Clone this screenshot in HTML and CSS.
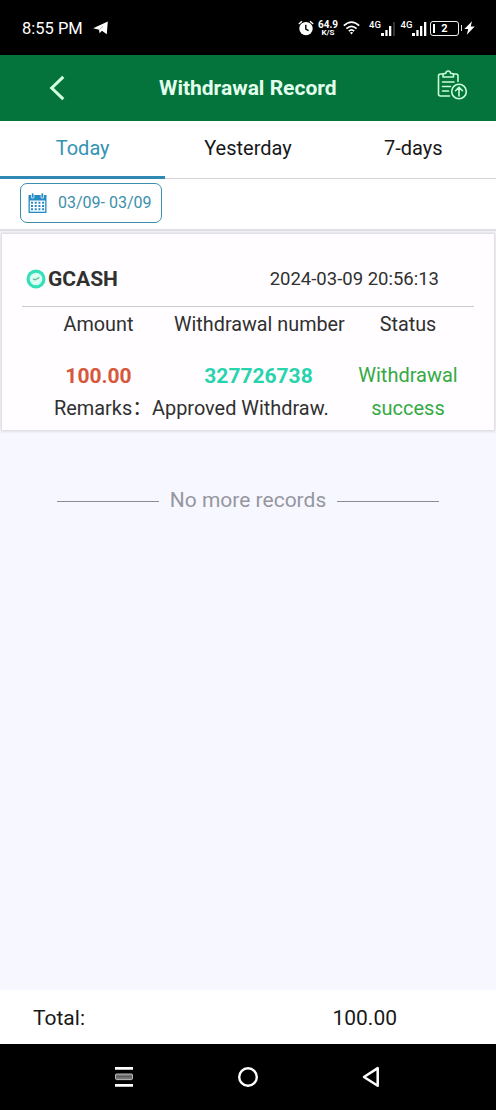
FILE: index.html
```html
<!DOCTYPE html>
<html lang="en">
<head>
<meta charset="utf-8">
<title>Withdrawal Record</title>
<link rel="stylesheet" href="styles.css">
</head>
<body>
<div class="screen">
  <div class="status-bar">
    <span class="clock">8:55 PM</span>
    <svg class="telegram" width="16" height="14" viewBox="0 0 16 14"><path d="M.2 7.200 14.800.5 13.800 13.300 8.900 9.700 6.600 12.300 6 8.800Z" fill="#fff"/><path d="M6.200 8.600 10 5.400" stroke="#000" stroke-width=".3"/></svg>
    <div class="status-icons">
      <svg class="alarm" width="16" height="16" viewBox="0 0 16 16" fill="none" stroke="#fff"><circle cx="8" cy="8.600" r="6.700" fill="#fff" stroke="none"/><path d="M.8 4 4 1.200M15.200 4 12 1.200" stroke-width="1.400"/><path d="M7.800 4.800V9l2.800 1.700" stroke="#000" stroke-width="1.400"/></svg>
      <div class="net-speed"><span class="speed">64.9</span><span class="unit">K/S</span></div>
      <svg class="wifi" width="17" height="14" viewBox="0 0 17 14" fill="none" stroke="#fff" stroke-width="1.700"><path d="M.8 4.700Q8.500-2.400 16.200 4.700M3.400 7.600Q8.500 3 13.600 7.600M5.800 10.200Q8.500 7.700 11.200 10.200"/><path d="m6.900 11.600 1.600 1.900 1.600-1.900Q8.500 10.400 6.900 11.600Z" fill="#fff" stroke="none"/></svg>
      <div class="signal"><span>4G</span><svg width="15" height="15" viewBox="0 0 15 15" fill="#fff"><path d="M0 12h3v3H0zM4.300 9h2.300v6H4.300zM8 5h2.300v10H8z"/><path d="M12 1h2v14h-2z" fill="#333"/></svg></div>
      <div class="signal"><span>4G</span><svg width="15" height="15" viewBox="0 0 15 15" fill="#fff"><path d="M0 12h3v3H0zM4.300 9h2.300v6H4.300zM8 5h2.300v10H8zM12 1h2.300v14H12z"/></svg></div>
      <div class="battery"><span>2</span></div>
      <svg class="bolt" width="11" height="14" viewBox="0 0 11 14"><path d="M8 .2.400 8h3.800L2.800 13.800l7.900-8.400H6.700Z" fill="#fff"/></svg>
    </div>
  </div>

  <header class="header">
    <svg class="back" width="16" height="26" viewBox="0 0 16 26" fill="none" stroke="#d2ffe0" stroke-width="3"><path d="M14.300 1.800 2.700 13 14.300 24.200"/></svg>
    <h1>Withdrawal Record</h1>
    <svg class="record-icon" width="31" height="31" viewBox="0 0 31 31" fill="none" stroke="#c6ffd8" stroke-width="1.600" stroke-linejoin="round" stroke-linecap="round"><path d="M6.500 4H3.500Q1.500 4 1.500 6V24Q1.500 26 3.500 26H12.500M16 4H19Q21 4 21 6V11.500"/><path d="M6 7V4.500Q6 3.500 7 3.500H8.800Q9 1 11.200 1T13.600 3.500H15.500Q16.500 3.500 16.500 4.500V7Z"/><path d="M5.500 12H17M5.500 16.500H13.500M5.500 21H11.500"/><circle cx="22" cy="21.500" r="7.300"/><path d="M22 26V17.500M18.500 20.700 22 17.200 25.500 20.700"/></svg>
  </header>

  <nav class="tabs">
    <div class="tab active">Today</div>
    <div class="tab">Yesterday</div>
    <div class="tab">7-days</div>
  </nav>

  <div class="filter">
    <div class="date-range">
      <svg width="19" height="20" viewBox="0 0 19 20"><path d="M.5 2h18v18H.5z" fill="#268ac4"/><path d="M1.800 7.500h15.400v11.200H1.800z" fill="#fff"/><path d="M3.500 0h2.400v5H3.500zM13.100 0h2.400v5h-2.400z" fill="#268ac4" stroke="#fff" stroke-width=".7"/><path d="M3 9.700h13.500M3 13h13.500M3 16.300h13.500" stroke="#268ac4" stroke-width="2" stroke-dasharray="2 1.700"/></svg>
      <span>03/09- 03/09</span>
    </div>
  </div>

  <main class="content">
    <section class="card">
      <div class="card-head">
        <svg width="20" height="20" viewBox="0 0 20 20"><circle cx="10" cy="10" r="9.500" fill="#35dfb7"/><circle cx="10" cy="10" r="6.300" fill="#d9fff2"/><path d="m6.900 9.800 2.200 1.100 4.300-2.500" fill="none" stroke="#58aa98" stroke-width="1.200"/></svg>
        <strong>GCASH</strong>
        <time>2024-03-09 20:56:13</time>
      </div>
      <div class="card-grid">
        <div class="label">Amount</div>
        <div class="label">Withdrawal number</div>
        <div class="label">Status</div>
        <div class="amount">100.00</div>
        <div class="number">327726738</div>
        <div class="status">Withdrawal success</div>
        <div class="remarks">Remarks：Approved Withdraw.</div>
      </div>
    </section>
    <div class="end">No more records</div>
  </main>

  <footer class="total"><span>Total:</span><span class="sum">100.00</span></footer>

  <div class="nav-bar">
    <svg width="20" height="22" viewBox="0 0 20 22"><path d="M1 1h18v2.800H1zM1 18h18v2.800H1z" fill="#fff"/><rect x="1.500" y="8" width="17" height="5.600" rx="1" fill="#777" stroke="#bbb"/><path d="M2 10.700h16" stroke="#555"/></svg>
    <svg width="22" height="22" viewBox="0 0 22 22"><circle cx="11" cy="11" r="8.800" fill="none" stroke="#fff" stroke-width="2.400"/></svg>
    <svg width="18" height="22" viewBox="0 0 18 22"><path d="M15.700 2.100V19.700L2 11Z" fill="none" stroke="#fff" stroke-width="2.500" stroke-linejoin="round"/></svg>
  </div>
</div>
</body>
</html>
```

FILE: styles.css
```css
* { box-sizing: border-box; }
body { margin: 0; font-family: Roboto, "Noto Sans CJK SC", sans-serif; font-size: 20px; color: #303030; }
svg { display: block; flex: none; }
.screen { width: 496px; height: 1110px; display: flex; flex-direction: column; background: #f7f8ff; }

.status-bar { height: 55px; flex: none; background: #000; color: #fff; display: flex; align-items: center; padding: 1px 21px 0 22px; }
.clock { font-size: 16.5px; }
.telegram { margin-left: 10px; }
.status-icons { margin-left: auto; display: flex; align-items: center; }
.net-speed { width: 20px; margin: 0 5px 0 4px; display: flex; flex-direction: column; align-items: center; font-weight: 700; white-space: nowrap; }
.speed { font-size: 10px; line-height: 9px; }
.unit { font-size: 8px; line-height: 8px; }
.signal { display: flex; align-items: flex-start; height: 15px; margin-left: 9px; }
.signal + .signal { margin-left: 5px; }
.signal span { width: 11.5px; font-size: 9.5px; line-height: 7px; font-weight: 500; }
.battery { position: relative; width: 29px; height: 15px; margin-left: 3px; border: 1.5px solid #eee; border-radius: 3px; font-size: 11px; line-height: 14px; font-weight: 700; text-align: center; }
.battery::before { content: ""; position: absolute; left: 1.5px; top: 2px; width: 2px; height: 9px; background: #fff; }
.battery::after { content: ""; position: absolute; right: -4px; top: 3px; width: 1.5px; height: 6px; background: #ddd; }
.bolt { margin-left: 5px; }

.header { height: 66px; flex: none; background: #04743c; display: grid; grid-template-columns: 110px 178px 1fr; align-items: center; padding: 0 28px 0 49px; }
.header h1 { margin: 0; font-size: 21px; font-weight: 700; color: #e2ffed; white-space: nowrap; }
.record-icon { margin-top: -5px; justify-self: end; }

.tabs { height: 58px; flex: none; background: #fff; display: grid; grid-template-columns: repeat(3, 1fr); border-bottom: 1px solid #d5d5d5; color: #181818; text-align: center; }
.tab { height: 58px; line-height: 54px; }
.tab.active { color: #3493b2; border-bottom: 3px solid #3089b5; }

.filter { height: 52px; flex: none; background: #fff; padding: 4px 20px; border-bottom: 2px solid #e0dedf; }
.date-range { width: 142px; height: 40px; border: 1.5px solid #3b8eac; border-radius: 7px; display: flex; align-items: center; padding-left: 7px; gap: 11px; font-size: 16px; line-height: 18px; color: #3c8fab; white-space: nowrap; }

.content { flex: 1; padding: 3px 2px 0; }
.card { height: 196px; background: #fffdff; padding: 0 20px; box-shadow: 0 0 3px 1px #cfcfd2; }
.card-head { height: 73px; border-bottom: 1px solid #cdcbcd; display: flex; align-items: center; padding: 17px 35px 0 4px; }
.card-head strong { margin-left: 2px; font-weight: 700; font-size: 21px; }
.card-head time { margin-left: auto; font-size: 18.5px; }
.card-grid { display: grid; grid-template-columns: 153px 167px 132px; grid-template-rows: 51px 33px 33px; padding-top: 1px; line-height: 33px; text-align: center; white-space: nowrap; }
.label { font-size: 19.8px; }
.label:nth-child(2) { margin-left: -1px; }
.amount { font-weight: 700; font-size: 21px; line-height: 34px; color: #d6573b; }
.number { font-weight: 700; font-size: 21px; line-height: 34px; color: #29d3ad; }
.status { grid-row: 2 / span 2; grid-column: 3; white-space: normal; color: #34aa43; }
.remarks { grid-column: 1 / span 2; text-align: left; padding-left: 32px; font-size: 19.9px; }
.end { display: flex; align-items: center; padding: 0 55px; margin-top: 55px; gap: 11px; line-height: 30px; font-size: 21px; color: #96969f; white-space: nowrap; }
.end::before, .end::after { content: ""; flex: 1; height: 1px; margin-top: 2px; background: #8c8d94; }

.total { height: 54px; flex: none; background: #fff; display: flex; align-items: center; justify-content: space-between; padding: 1px 99px 0 33px; font-size: 21px; color: #181818; }
.nav-bar { height: 66px; flex: none; background: #000; display: flex; align-items: center; justify-content: space-between; padding: 0 116px 0 114px; }
```
